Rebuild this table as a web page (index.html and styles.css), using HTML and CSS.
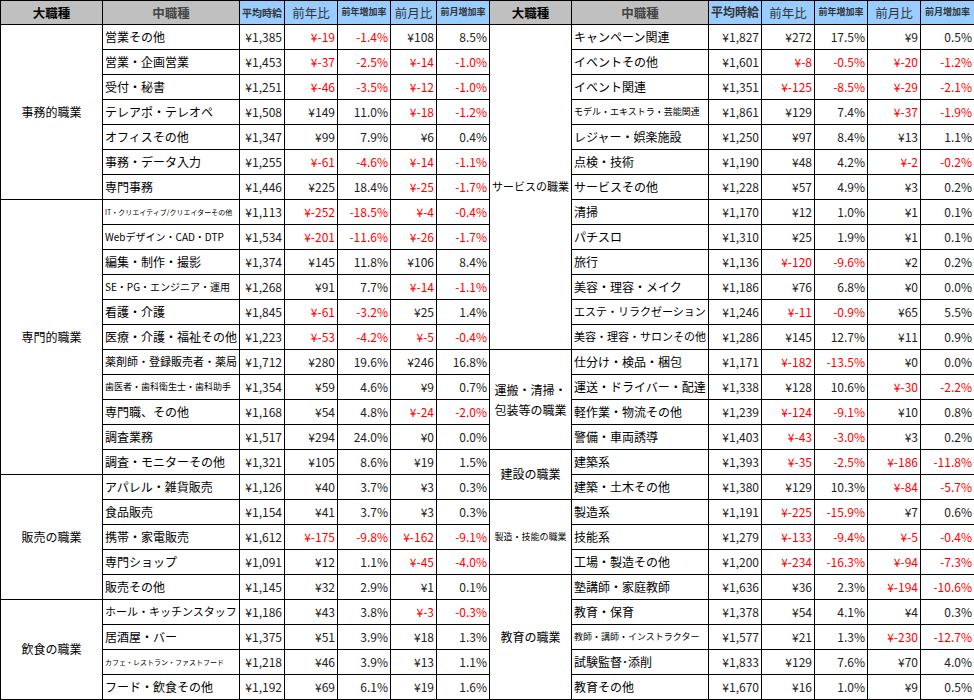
FILE: index.html
```html
<!DOCTYPE html>
<html lang="ja">
<head>
<meta charset="utf-8">
<title>職種別平均時給</title>
<link rel="stylesheet" href="styles.css">
</head>
<body>
<table class="grid">
<colgroup>
<col class="w-cat"><col class="w-sub"><col class="w-avgL"><col class="w-num"><col class="w-num"><col class="w-momL"><col class="w-num">
<col class="w-catR"><col class="w-sub"><col class="w-num"><col class="w-num"><col class="w-num"><col class="w-num"><col class="w-last">
</colgroup>
<thead>
<tr class="head">
<th class="hg hbig">大職種</th><th class="hg hmid">中職種</th><th class="hb hsm">平均時給</th><th class="hb hreg">前年比</th><th class="hb hxs">前年増加率</th><th class="hb hreg">前月比</th><th class="hb hxs">前月増加率</th>
<th class="hg hbig">大職種</th><th class="hg hmid">中職種</th><th class="hb havg">平均時給</th><th class="hb hreg">前年比</th><th class="hb hxs">前年増加率</th><th class="hb hreg">前月比</th><th class="hb hxs">前月増加率</th>
</tr>
</thead>
<tbody>
<tr>
<td class="cat" rowspan="7">事務的職業</td><td class="t">営業その他</td><td class="n">¥1,385</td><td class="n r">¥-19</td><td class="n r">-1.4%</td><td class="n">¥108</td><td class="n">8.5%</td>
<td class="cat s11 tight" rowspan="13">サービスの職業</td><td class="t">キャンペーン関連</td><td class="n">¥1,827</td><td class="n">¥272</td><td class="n">17.5%</td><td class="n">¥9</td><td class="n">0.5%</td>
</tr>
<tr>
<td class="t">営業・企画営業</td><td class="n">¥1,453</td><td class="n r">¥-37</td><td class="n r">-2.5%</td><td class="n r">¥-14</td><td class="n r">-1.0%</td>
<td class="t">イベントその他</td><td class="n">¥1,601</td><td class="n r">¥-8</td><td class="n r">-0.5%</td><td class="n r">¥-20</td><td class="n r">-1.2%</td>
</tr>
<tr>
<td class="t">受付・秘書</td><td class="n">¥1,251</td><td class="n r">¥-46</td><td class="n r">-3.5%</td><td class="n r">¥-12</td><td class="n r">-1.0%</td>
<td class="t">イベント関連</td><td class="n">¥1,351</td><td class="n r">¥-125</td><td class="n r">-8.5%</td><td class="n r">¥-29</td><td class="n r">-2.1%</td>
</tr>
<tr>
<td class="t">テレアポ・テレオペ</td><td class="n">¥1,508</td><td class="n">¥149</td><td class="n">11.0%</td><td class="n r">¥-18</td><td class="n r">-1.2%</td>
<td class="t s9">モデル・エキストラ・芸能関連</td><td class="n">¥1,861</td><td class="n">¥129</td><td class="n">7.4%</td><td class="n r">¥-37</td><td class="n r">-1.9%</td>
</tr>
<tr>
<td class="t">オフィスその他</td><td class="n">¥1,347</td><td class="n">¥99</td><td class="n">7.9%</td><td class="n">¥6</td><td class="n">0.4%</td>
<td class="t">レジャー・娯楽施設</td><td class="n">¥1,250</td><td class="n">¥97</td><td class="n">8.4%</td><td class="n">¥13</td><td class="n">1.1%</td>
</tr>
<tr>
<td class="t">事務・データ入力</td><td class="n">¥1,255</td><td class="n r">¥-61</td><td class="n r">-4.6%</td><td class="n r">¥-14</td><td class="n r">-1.1%</td>
<td class="t">点検・技術</td><td class="n">¥1,190</td><td class="n">¥48</td><td class="n">4.2%</td><td class="n r">¥-2</td><td class="n r">-0.2%</td>
</tr>
<tr>
<td class="t">専門事務</td><td class="n">¥1,446</td><td class="n">¥225</td><td class="n">18.4%</td><td class="n r">¥-25</td><td class="n r">-1.7%</td>
<td class="t">サービスその他</td><td class="n">¥1,228</td><td class="n">¥57</td><td class="n">4.9%</td><td class="n">¥3</td><td class="n">0.2%</td>
</tr>
<tr>
<td class="cat" rowspan="11">専門的職業</td><td class="t s7">IT・クリエイティブ/クリエイターその他</td><td class="n">¥1,113</td><td class="n r">¥-252</td><td class="n r">-18.5%</td><td class="n r">¥-4</td><td class="n r">-0.4%</td>
<td class="t">清掃</td><td class="n">¥1,170</td><td class="n">¥12</td><td class="n">1.0%</td><td class="n">¥1</td><td class="n">0.1%</td>
</tr>
<tr>
<td class="t s10">Webデザイン・CAD・DTP</td><td class="n">¥1,534</td><td class="n r">¥-201</td><td class="n r">-11.6%</td><td class="n r">¥-26</td><td class="n r">-1.7%</td>
<td class="t">パチスロ</td><td class="n">¥1,310</td><td class="n">¥25</td><td class="n">1.9%</td><td class="n">¥1</td><td class="n">0.1%</td>
</tr>
<tr>
<td class="t">編集・制作・撮影</td><td class="n">¥1,374</td><td class="n">¥145</td><td class="n">11.8%</td><td class="n">¥106</td><td class="n">8.4%</td>
<td class="t">旅行</td><td class="n">¥1,136</td><td class="n r">¥-120</td><td class="n r">-9.6%</td><td class="n">¥2</td><td class="n">0.2%</td>
</tr>
<tr>
<td class="t s10">SE・PG・エンジニア・運用</td><td class="n">¥1,268</td><td class="n">¥91</td><td class="n">7.7%</td><td class="n r">¥-14</td><td class="n r">-1.1%</td>
<td class="t">美容・理容・メイク</td><td class="n">¥1,186</td><td class="n">¥76</td><td class="n">6.8%</td><td class="n">¥0</td><td class="n">0.0%</td>
</tr>
<tr>
<td class="t">看護・介護</td><td class="n">¥1,845</td><td class="n r">¥-61</td><td class="n r">-3.2%</td><td class="n">¥25</td><td class="n">1.4%</td>
<td class="t s11">エステ・リラクゼーション</td><td class="n">¥1,246</td><td class="n r">¥-11</td><td class="n r">-0.9%</td><td class="n">¥65</td><td class="n">5.5%</td>
</tr>
<tr>
<td class="t">医療・介護・福祉その他</td><td class="n">¥1,223</td><td class="n r">¥-53</td><td class="n r">-4.2%</td><td class="n r">¥-5</td><td class="n r">-0.4%</td>
<td class="t s11">美容・理容・サロンその他</td><td class="n">¥1,286</td><td class="n">¥145</td><td class="n">12.7%</td><td class="n">¥11</td><td class="n">0.9%</td>
</tr>
<tr>
<td class="t s11">薬剤師・登録販売者・薬局</td><td class="n">¥1,712</td><td class="n">¥280</td><td class="n">19.6%</td><td class="n">¥246</td><td class="n">16.8%</td>
<td class="cat wrap" rowspan="4">運搬・清掃・<br>包装等の職業</td><td class="t">仕分け・検品・梱包</td><td class="n">¥1,171</td><td class="n r">¥-182</td><td class="n r">-13.5%</td><td class="n">¥0</td><td class="n">0.0%</td>
</tr>
<tr>
<td class="t s9">歯医者・歯科衛生士・歯科助手</td><td class="n">¥1,354</td><td class="n">¥59</td><td class="n">4.6%</td><td class="n">¥9</td><td class="n">0.7%</td>
<td class="t">運送・ドライバー・配達</td><td class="n">¥1,338</td><td class="n">¥128</td><td class="n">10.6%</td><td class="n r">¥-30</td><td class="n r">-2.2%</td>
</tr>
<tr>
<td class="t">専門職、その他</td><td class="n">¥1,168</td><td class="n">¥54</td><td class="n">4.8%</td><td class="n r">¥-24</td><td class="n r">-2.0%</td>
<td class="t">軽作業・物流その他</td><td class="n">¥1,239</td><td class="n r">¥-124</td><td class="n r">-9.1%</td><td class="n">¥10</td><td class="n">0.8%</td>
</tr>
<tr>
<td class="t">調査業務</td><td class="n">¥1,517</td><td class="n">¥294</td><td class="n">24.0%</td><td class="n">¥0</td><td class="n">0.0%</td>
<td class="t">警備・車両誘導</td><td class="n">¥1,403</td><td class="n r">¥-43</td><td class="n r">-3.0%</td><td class="n">¥3</td><td class="n">0.2%</td>
</tr>
<tr>
<td class="t">調査・モニターその他</td><td class="n">¥1,321</td><td class="n">¥105</td><td class="n">8.6%</td><td class="n">¥19</td><td class="n">1.5%</td>
<td class="cat" rowspan="2">建設の職業</td><td class="t">建築系</td><td class="n">¥1,393</td><td class="n r">¥-35</td><td class="n r">-2.5%</td><td class="n r">¥-186</td><td class="n r">-11.8%</td>
</tr>
<tr>
<td class="cat" rowspan="5">販売の職業</td><td class="t">アパレル・雑貨販売</td><td class="n">¥1,126</td><td class="n">¥40</td><td class="n">3.7%</td><td class="n">¥3</td><td class="n">0.3%</td>
<td class="t">建築・土木その他</td><td class="n">¥1,380</td><td class="n">¥129</td><td class="n">10.3%</td><td class="n r">¥-84</td><td class="n r">-5.7%</td>
</tr>
<tr>
<td class="t">食品販売</td><td class="n">¥1,154</td><td class="n">¥41</td><td class="n">3.7%</td><td class="n">¥3</td><td class="n">0.3%</td>
<td class="cat s9" rowspan="3">製造・技能の職業</td><td class="t">製造系</td><td class="n">¥1,191</td><td class="n r">¥-225</td><td class="n r">-15.9%</td><td class="n">¥7</td><td class="n">0.6%</td>
</tr>
<tr>
<td class="t">携帯・家電販売</td><td class="n">¥1,612</td><td class="n r">¥-175</td><td class="n r">-9.8%</td><td class="n r">¥-162</td><td class="n r">-9.1%</td>
<td class="t">技能系</td><td class="n">¥1,279</td><td class="n r">¥-133</td><td class="n r">-9.4%</td><td class="n r">¥-5</td><td class="n r">-0.4%</td>
</tr>
<tr>
<td class="t">専門ショップ</td><td class="n">¥1,091</td><td class="n">¥12</td><td class="n">1.1%</td><td class="n r">¥-45</td><td class="n r">-4.0%</td>
<td class="t">工場・製造その他</td><td class="n">¥1,200</td><td class="n r">¥-234</td><td class="n r">-16.3%</td><td class="n r">¥-94</td><td class="n r">-7.3%</td>
</tr>
<tr>
<td class="t">販売その他</td><td class="n">¥1,145</td><td class="n">¥32</td><td class="n">2.9%</td><td class="n">¥1</td><td class="n">0.1%</td>
<td class="cat" rowspan="5">教育の職業</td><td class="t">塾講師・家庭教師</td><td class="n">¥1,636</td><td class="n">¥36</td><td class="n">2.3%</td><td class="n r">¥-194</td><td class="n r">-10.6%</td>
</tr>
<tr>
<td class="cat" rowspan="4">飲食の職業</td><td class="t s11">ホール・キッチンスタッフ</td><td class="n">¥1,186</td><td class="n">¥43</td><td class="n">3.8%</td><td class="n r">¥-3</td><td class="n r">-0.3%</td>
<td class="t">教育・保育</td><td class="n">¥1,378</td><td class="n">¥54</td><td class="n">4.1%</td><td class="n">¥4</td><td class="n">0.3%</td>
</tr>
<tr>
<td class="t">居酒屋・バー</td><td class="n">¥1,375</td><td class="n">¥51</td><td class="n">3.9%</td><td class="n">¥18</td><td class="n">1.3%</td>
<td class="t s9">教師・講師・インストラクター</td><td class="n">¥1,577</td><td class="n">¥21</td><td class="n">1.3%</td><td class="n r">¥-230</td><td class="n r">-12.7%</td>
</tr>
<tr>
<td class="t s7">カフェ・レストラン・ファストフード</td><td class="n">¥1,218</td><td class="n">¥46</td><td class="n">3.9%</td><td class="n">¥13</td><td class="n">1.1%</td>
<td class="t">試験監督･添削</td><td class="n">¥1,833</td><td class="n">¥129</td><td class="n">7.6%</td><td class="n">¥70</td><td class="n">4.0%</td>
</tr>
<tr>
<td class="t">フード・飲食その他</td><td class="n">¥1,192</td><td class="n">¥69</td><td class="n">6.1%</td><td class="n">¥19</td><td class="n">1.6%</td>
<td class="t">教育その他</td><td class="n">¥1,670</td><td class="n">¥16</td><td class="n">1.0%</td><td class="n">¥9</td><td class="n">0.5%</td>
</tr>
</tbody>
</table>
</body>
</html>
```

FILE: styles.css
```css
html, body {
  margin: 0;
  padding: 0;
  background: #ffffff;
}

body {
  font-family: "Noto Sans CJK JP", "Noto Sans", sans-serif;
  font-size: 12px;
  color: #000;
}

.grid {
  border-collapse: collapse;
  table-layout: fixed;
  width: 974px;
}

.w-cat { width: 102px; }
.w-sub { width: 137px; }
.w-avgL { width: 45px; }
.w-num { width: 53px; }
.w-momL { width: 46px; }
.w-catR { width: 82px; }
.w-last { width: 54px; }

.grid th,
.grid td {
  border: 1px solid #000;
  padding: 0 2px;
  white-space: nowrap;
  overflow: hidden;
  line-height: 1.2;
  vertical-align: middle;
}

.head { height: 24px; }
.grid tbody tr { height: 25px; }

.hg { background: #c0c0c0; }
.hb { background: #99ccff; color: #333; }

.hbig { font-size: 12.5px; font-weight: bold; color: #000; }
.hmid { font-size: 12.5px; font-weight: bold; color: #444; }
.hsm { font-size: 10px; font-weight: bold; }
.havg { font-size: 12px; font-weight: bold; }
.hreg { font-size: 12.5px; font-weight: normal; }
.hxs { font-size: 9px; font-weight: bold; }

.cat {
  text-align: center;
  font-size: 12px;
}

.grid td.tight {
  padding: 0;
}

.grid td.wrap {
  line-height: 20px;
  padding: 0;
}

.t {
  text-align: left;
  padding-left: 2px;
}

.n {
  text-align: right;
  color: #222;
  padding-right: 3px;
  font-size: 12px;
}

.r { color: #ff0000; }

.s7 { font-size: 7px; }
.s9 { font-size: 9px; }
.s10 { font-size: 10px; }
.s11 { font-size: 11px; }
```
